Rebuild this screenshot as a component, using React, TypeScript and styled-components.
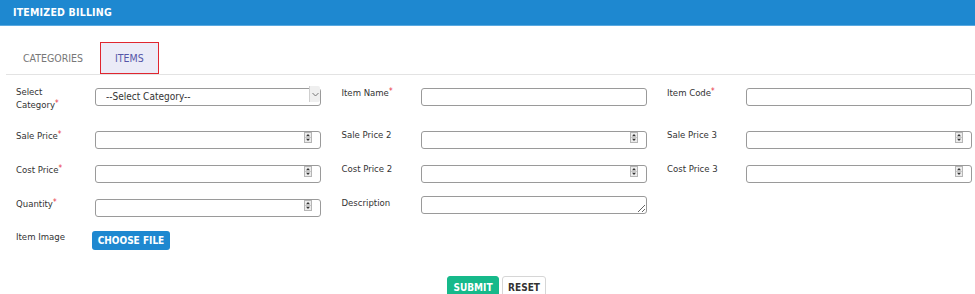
import { createGlobalStyle, styled } from "styled-components";

const GlobalStyle = createGlobalStyle`
  body {
    margin: 0;
    background: #ffffff;
    font-family: "DejaVu Sans Condensed", "DejaVu Sans", "Liberation Sans", sans-serif;
  }
  * {
    box-sizing: border-box;
  }
`;

type FieldDef = {
  label: string;
  required?: boolean;
  kind: "select" | "text" | "number" | "textarea" | "file" | "empty";
};

const rows: FieldDef[][] = [
  [
    { label: "Select Category", required: true, kind: "select" },
    { label: "Item Name", required: true, kind: "text" },
    { label: "Item Code", required: true, kind: "text" },
  ],
  [
    { label: "Sale Price", required: true, kind: "number" },
    { label: "Sale Price 2", kind: "number" },
    { label: "Sale Price 3", kind: "number" },
  ],
  [
    { label: "Cost Price", required: true, kind: "number" },
    { label: "Cost Price 2", kind: "number" },
    { label: "Cost Price 3", kind: "number" },
  ],
  [
    { label: "Quantity", required: true, kind: "number" },
    { label: "Description", kind: "textarea" },
    { label: "", kind: "empty" },
  ],
  [{ label: "Item Image", kind: "file" }],
];

const Spinner = () => (
  <SpinBox>
    <svg width="8" height="11" viewBox="0 0 8 11">
      <rect x="0.5" y="0.5" width="7" height="10" fill="#ececec" stroke="#b5b5b5" />
      <line x1="1" y1="5.5" x2="7" y2="5.5" stroke="#c8c8c8" />
      <path d="M4 2 L6 4.2 L2 4.2 Z" fill="#333" />
      <path d="M4 9 L6 6.8 L2 6.8 Z" fill="#333" />
    </svg>
  </SpinBox>
);

const Control = ({ kind }: { kind: FieldDef["kind"] }) => {
  switch (kind) {
    case "select":
      return (
        <ControlWrap>
          <Select defaultValue="">
            <option value="">--Select Category--</option>
          </Select>
          <SelectArrow>
            <svg width="7" height="5" viewBox="0 0 7 5">
              <path d="M0.5 1 L3.5 4 L6.5 1" fill="none" stroke="#777" strokeWidth="1" />
            </svg>
          </SelectArrow>
        </ControlWrap>
      );
    case "number":
      return (
        <ControlWrap>
          <Input type="text" />
          <Spinner />
        </ControlWrap>
      );
    case "textarea":
      return (
        <ControlWrap>
          <TextArea />
        </ControlWrap>
      );
    case "file":
      return <FileButton type="button">CHOOSE FILE</FileButton>;
    case "empty":
      return null;
    default:
      return (
        <ControlWrap>
          <Input type="text" />
        </ControlWrap>
      );
  }
};

function App() {
  return (
    <>
      <GlobalStyle />
      <Header>ITEMIZED BILLING</Header>
      <TabBar>
        <Tab $active={false}>CATEGORIES</Tab>
        <Tab $active={true}>ITEMS</Tab>
      </TabBar>
      <Form>
        {rows.map((row, i) => (
          <Row key={i}>
            {row.map((f, j) => (
              <Field key={j}>
                <Label $wrap={f.kind === "select"}>
                  {f.label}
                  {f.required && <Req>*</Req>}
                </Label>
                <Control kind={f.kind} />
              </Field>
            ))}
          </Row>
        ))}
        <Actions>
          <SubmitButton type="button">SUBMIT</SubmitButton>
          <ResetButton type="button">RESET</ResetButton>
        </Actions>
      </Form>
    </>
  );
}

export default App;

const Header = styled.div`
  height: 26px;
  background: #1e88d0;
  border-bottom: 1px solid #5aa9e0;
  color: #ffffff;
  font-weight: bold;
  font-size: 10.5px;
  line-height: 25px;
  padding-left: 13px;
  letter-spacing: 0.2px;
`;

const TabBar = styled.div`
  display: flex;
  margin: 16px 0 0 6px;
  padding-left: 2px;
  height: 33px;
  border-bottom: 1px solid #e3e3e3;
  align-items: flex-start;
`;

const Tab = styled.div<{ $active: boolean }>`
  height: 32px;
  padding: 0 14px;
  margin-right: 2px;
  display: flex;
  align-items: center;
  font-size: 10.5px;
  color: ${({ $active }) => ($active ? "#5555a8" : "#777777")};
  background: ${({ $active }) => ($active ? "#ebebf7" : "transparent")};
  border: ${({ $active }) => ($active ? "1px solid #e0262f" : "1px solid transparent")};
`;

const Form = styled.div`
  padding: 10px 0 0 16px;
`;

const Row = styled.div`
  display: grid;
  grid-template-columns: repeat(3, 305px);
  column-gap: 20.5px;
  margin-bottom: 16px;
`;

const Field = styled.div`
  display: flex;
  align-items: flex-start;
`;

const Label = styled.div<{ $wrap: boolean }>`
  width: ${({ $wrap }) => ($wrap ? "60px" : "79px")};
  margin-right: ${({ $wrap }) => ($wrap ? "19px" : "0")};
  flex-shrink: 0;
  font-size: 9.5px;
  line-height: 12px;
  padding-top: 1px;
  padding-bottom: 1px;
  color: #333333;
`;

const Req = styled.span`
  color: #e8323c;
  font-size: 8px;
  vertical-align: 2px;
`;

const ControlWrap = styled.div`
  position: relative;
  width: 226px;
  height: 18px;
`;

const Input = styled.input`
  width: 100%;
  height: 18px;
  border: 1px solid #9a9a9a;
  border-radius: 3px;
  padding: 0 6px;
  font-size: 9.5px;
  font-family: inherit;
  outline: none;
  background: #ffffff;
`;

const Select = styled.select`
  appearance: none;
  width: 100%;
  height: 18px;
  border: 1px solid #9a9a9a;
  border-radius: 3px;
  padding: 0 0 0 10px;
  font-size: 10px;
  font-family: inherit;
  color: #333333;
  background: #ffffff;
  outline: none;
`;

const SelectArrow = styled.span`
  position: absolute;
  top: 1px;
  right: 1px;
  width: 11px;
  height: 16px;
  background: #efefef;
  border-left: 1px solid #cfcfcf;
  border-radius: 0 2px 2px 0;
  display: flex;
  align-items: center;
  justify-content: center;
  pointer-events: none;
`;

const SpinBox = styled.span`
  position: absolute;
  top: 4px;
  right: 9px;
  display: flex;
  pointer-events: none;
`;

const TextArea = styled.textarea`
  display: block;
  width: 100%;
  height: 18px;
  border: 1px solid #9a9a9a;
  border-radius: 3px;
  padding: 0 6px;
  font-family: inherit;
  font-size: 9.5px;
  resize: both;
  outline: none;
`;

const FileButton = styled.button`
  margin-left: -3px;
  margin-top: 1px;
  width: 78px;
  height: 19px;
  border: none;
  border-radius: 3px;
  background: #1e88d0;
  color: #ffffff;
  font-family: inherit;
  font-weight: bold;
  font-size: 10px;
  padding: 0;
`;

const Actions = styled.div`
  display: flex;
  justify-content: center;
  gap: 3px;
  padding-left: 2px;
  margin-top: 26px;
`;

const SubmitButton = styled.button`
  height: 22px;
  width: 52px;
  padding: 0;
  border: 1px solid #16b98a;
  border-radius: 3px;
  background: #16b98a;
  color: #ffffff;
  font-family: inherit;
  font-weight: bold;
  font-size: 10px;
`;

const ResetButton = styled.button`
  height: 22px;
  width: 44px;
  padding: 0;
  border: 1px solid #d6d6d6;
  border-radius: 3px;
  background: #ffffff;
  color: #333333;
  font-family: inherit;
  font-weight: bold;
  font-size: 10px;
`;
